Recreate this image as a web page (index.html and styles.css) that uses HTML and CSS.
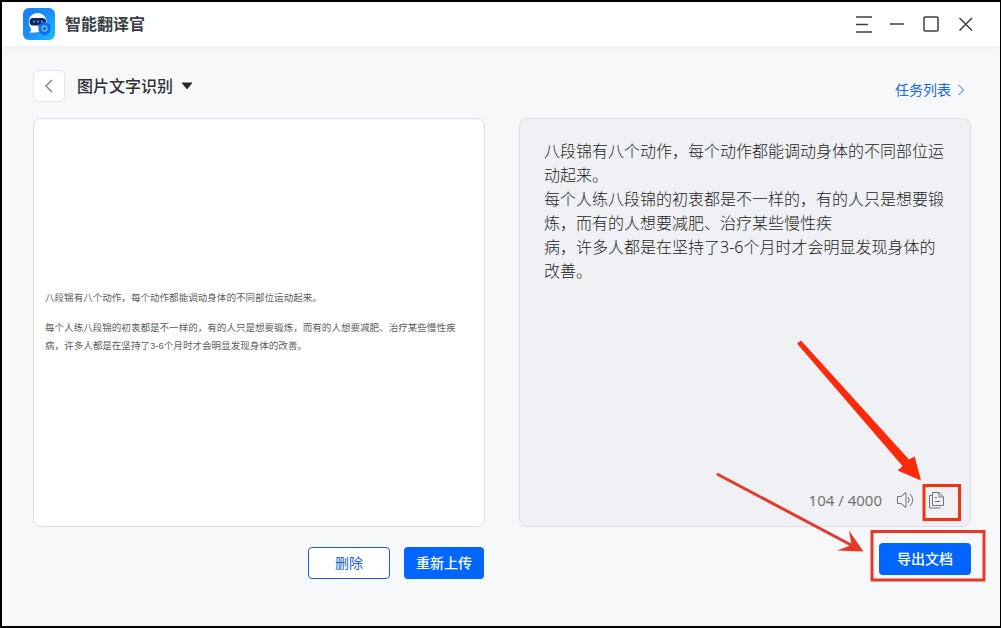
FILE: index.html
```html
<!DOCTYPE html>
<html lang="zh-CN">
<head>
    <meta charset="UTF-8">
    <meta name="viewport" content="width=device-width, initial-scale=1.0">
    <title>智能翻译官</title>
    <link rel="stylesheet" href="styles.css">
</head>
<body>
    <div class="window">
        <header class="titlebar">
            <svg class="logo" viewBox="0 0 32 32" aria-hidden="true">
                <defs>
                    <linearGradient id="logoBg" x1="0" y1="0" x2="1" y2="1">
                        <stop offset="0" stop-color="#1a7df5"/>
                        <stop offset="0.5" stop-color="#1a8dfb"/>
                        <stop offset="1" stop-color="#1cc4fa"/>
                    </linearGradient>
                </defs>
                <rect width="32" height="32" rx="6" fill="url(#logoBg)"/>
                <path d="M14.500 5C9.500 5 5.800 8.500 5.800 14c0 3 1 5 2.200 6.500.3 2-.5 3-2 4 5 .5 12 0 15-3.500 2-2 2.500-4.500 2.500-7C23.500 8.500 19.500 5 14.500 5z" fill="#fff"/>
                <rect x="6.500" y="10" width="16.500" height="7.500" rx="3.700" fill="#10245f"/>
                <circle cx="11" cy="13.700" r="1.100" fill="#5a8ff0"/>
                <circle cx="15" cy="13.700" r="1.100" fill="#5a8ff0"/>
                <circle cx="19" cy="13.700" r="1.100" fill="#5a8ff0"/>
                <path d="M21.500 14l6 2.500v4.500c0 3-2 5-6 6.500-4-1.500-6-3.500-6-6.500v-4.500z" fill="#0b6bf2"/>
                <circle cx="21.500" cy="20.500" r="2.500" fill="none" stroke="#6cc0ff" stroke-width="1.300"/>
            </svg>
            <h1>智能翻译官</h1>
            <div class="window-controls">
                <button type="button" aria-label="菜单">
                    <svg viewBox="0 0 18 18"><path d="M1 2h16M1 9.500h12M1 17h16"/></svg>
                </button>
                <button type="button" aria-label="最小化">
                    <svg viewBox="0 0 18 18"><path d="M1 9h14"/></svg>
                </button>
                <button type="button" aria-label="最大化">
                    <svg viewBox="0 0 18 18"><rect x="1" y="2" width="14" height="14" rx="1"/></svg>
                </button>
                <button type="button" aria-label="关闭">
                    <svg viewBox="0 0 18 18"><path d="M2.500 3l12.500 12.500M15 3L2.500 15.500"/></svg>
                </button>
            </div>
        </header>

        <main class="content">
            <div class="toolbar">
                <button type="button" class="back" aria-label="返回">
                    <svg viewBox="0 0 16 16"><path d="M11 2L5 8l6 6"/></svg>
                </button>
                <button type="button" class="mode">
                    图片文字识别
                    <svg viewBox="0 0 12 8"><path d="M1.500 0.500h9q1 0 .4 1L6.800 6.500q-.8 1-1.600 0L1.100 1.500Q.5 .5 1.500 .5z"/></svg>
                </button>
                <a href="#" class="tasks">
                    任务列表
                    <svg viewBox="0 0 8 12"><path d="M1.500 1L6.500 6l-5 5"/></svg>
                </a>
            </div>

            <div class="columns">
                <section class="column">
                    <div class="panel preview">
                        <!-- uploaded page, scaled to the panel width -->
                        <svg viewBox="0 0 942 140" role="img" aria-label="上传的图片">
                            <text x="23" y="26">八段锦有八个动作，每个动作都能调动身体的不同部位运动起来。</text>
                            <text x="23" y="87">每个人练八段锦的初衷都是不一样的，有的人只是想要锻炼，而有的人想要减肥、治疗某些慢性疾</text>
                            <text x="23" y="125">病，许多人都是在坚持了3-6个月时才会明显发现身体的改善。</text>
                        </svg>
                    </div>
                    <div class="actions upload">
                        <button type="button" class="btn btn-outline">删除</button>
                        <button type="button" class="btn">重新上传</button>
                    </div>
                </section>

                <section class="column">
                    <div class="panel result">
                        <textarea aria-label="识别结果" maxlength="4000" spellcheck="false">八段锦有八个动作，每个动作都能调动身体的不同部位运动起来。
每个人练八段锦的初衷都是不一样的，有的人只是想要锻炼，而有的人想要减肥、治疗某些慢性疾
病，许多人都是在坚持了3-6个月时才会明显发现身体的改善。</textarea>
                        <div class="result-footer">
                            <span class="count">104 / 4000</span>
                            <button type="button" aria-label="朗读">
                                <svg viewBox="0 0 18 18"><path d="M1.500 5.500h3.500L10 1.500v15l-5-4H1.500zM12 6q2.500 3 0 6M14 3q5.500 6 0 12"/></svg>
                            </button>
                            <button type="button" aria-label="复制">
                                <svg viewBox="0 0 18 18"><path d="M4.500 1.500h6.500l4.500 4.500v8.500H4.500zM11 1.500V6h4.500M7 6.500h2M7 10.500h5M4.500 4.500h-3v12.500h11"/></svg>
                            </button>
                        </div>
                    </div>
                    <div class="actions export">
                        <button type="button" class="btn btn-export">导出文档</button>
                    </div>
                </section>
            </div>
        </main>

        <!-- step markers pointing at copy and export -->
        <svg class="markers" viewBox="0 0 301 298" aria-hidden="true">
            <path class="bold-arrow" d="M97 13.500L101 10.500 209 129.500 214.700 126.500 221 150.500 197.700 140.500 202.500 136z"/>
            <rect class="bold-box" x="224" y="155.500" width="35.500" height="34"/>
            <path class="thin-line" d="M18 144.500L153 216"/>
            <path class="thin-head" d="M163.500 221.500L149 200.500 151.500 215 137 220.500z"/>
            <rect class="thin-box" x="172" y="201.500" width="112" height="48.500"/>
        </svg>
    </div>
</body>
</html>
```

FILE: styles.css
```css
* {
    box-sizing: border-box;
}
body {
    margin: 0;
    font-family: "Noto Sans", "Noto Sans CJK SC", sans-serif;
    color: #303133;
}
button {
    font-family: inherit;
    padding: 0;
    border: none;
    background: none;
    cursor: pointer;
}
svg {
    display: block;
}
.window {
    position: relative;
    display: flex;
    flex-direction: column;
    min-height: 100vh;
    border: 2px solid #000;
    border-right-width: 1px;
    background-color: #f7f8fa;
}
.titlebar {
    display: flex;
    align-items: center;
    height: 44px;
    padding: 0 25px 0 21px;
    background-color: #fff;
    box-shadow: 0 1px 6px rgba(0, 0, 0, 0.06);
}
.logo {
    width: 32px;
    height: 32px;
}
h1 {
    margin: 0 0 0 10px;
    font-size: 16px;
    line-height: 24px;
    font-weight: 700;
    color: #3c3f44;
}
.window-controls {
    display: flex;
    gap: 16px;
    margin-left: auto;
}
.window-controls svg {
    width: 18px;
    height: 18px;
    fill: none;
    stroke: #3c3f44;
    stroke-width: 1.5;
}
.content {
    flex: 1;
    display: flex;
    flex-direction: column;
    padding: 24px 29px 47px 31px;
}
.toolbar {
    display: flex;
    align-items: center;
    height: 32px;
    margin-bottom: 16px;
}
.back {
    display: flex;
    align-items: center;
    justify-content: center;
    width: 32px;
    height: 32px;
    border: 1px solid #e4e6eb;
    border-radius: 5px;
    background-color: #fff;
}
.back svg {
    width: 16px;
    height: 16px;
    fill: none;
    stroke: #85878c;
    stroke-width: 1.5;
}
.mode {
    display: flex;
    align-items: center;
    gap: 8px;
    margin-left: 12px;
    font-size: 16px;
    line-height: 24px;
    font-weight: 500;
    color: #303133;
}
.mode svg {
    width: 12px;
    height: 8px;
    fill: #26282c;
}
.tasks {
    display: flex;
    align-items: center;
    gap: 6px;
    margin-left: auto;
    padding: 8px 6px 0 0;
    font-size: 14px;
    line-height: 20px;
    color: #1769e8;
    text-decoration: none;
}
.tasks svg {
    width: 8px;
    height: 12px;
    fill: none;
    stroke: #1769e8;
}
.columns {
    flex: 1;
    display: grid;
    grid-template-columns: 1fr 1fr;
    gap: 34px;
}
.column {
    display: flex;
    flex-direction: column;
}
.panel {
    flex: 1;
    display: flex;
    flex-direction: column;
    border: 1px solid #dcdfe6;
    border-radius: 8px;
}
.preview {
    justify-content: center;
    background-color: #fff;
}
.preview svg {
    width: 100%;
}
.preview text {
    font-family: "Liberation Sans", "Noto Sans CJK SC", sans-serif;
    font-size: 20px;
    fill: #606060;
}
.result {
    padding: 20px 24px 14px;
    background-color: #f0f1f5;
}
textarea {
    flex: 1;
    width: 100%;
    padding: 0;
    border: none;
    outline: none;
    resize: none;
    overflow: hidden;
    background: none;
    font-family: inherit;
    font-size: 16px;
    line-height: 24px;
    font-weight: 300;
    color: #1c1d20;
}
.result-footer {
    display: flex;
    align-items: center;
    justify-content: flex-end;
    gap: 14px;
    height: 24px;
}
.count {
    font-size: 15px;
    line-height: 24px;
    color: #707276;
}
.result-footer svg {
    width: 18px;
    height: 18px;
    fill: none;
    stroke: #707276;
}
.actions {
    display: flex;
    justify-content: flex-end;
    gap: 14px;
}
.upload {
    padding: 20px 1px 0 0;
}
.export {
    padding: 16px 0 4px;
}
.btn {
    width: 80px;
    height: 32px;
    border-radius: 4px;
    background-color: #0066ff;
    font-size: 14px;
    line-height: 20px;
    font-weight: 500;
    color: #fff;
}
.btn-outline {
    width: 82px;
    border: 1px solid #1a5fd8;
    background-color: #fff;
    font-weight: 400;
    color: #1a5fd8;
}
.btn-export {
    width: 92px;
}
.markers {
    position: absolute;
    right: -1px;
    bottom: -2px;
    width: 301px;
    height: 298px;
    pointer-events: none;
}
.bold-arrow {
    fill: #fa2a0a;
}
.bold-box {
    fill: none;
    stroke: #f03312;
    stroke-width: 3;
}
.thin-line, .thin-box {
    fill: none;
    stroke: #e6392b;
    stroke-width: 3;
    stroke-linecap: round;
}
.thin-head {
    fill: #e6392b;
}
```
